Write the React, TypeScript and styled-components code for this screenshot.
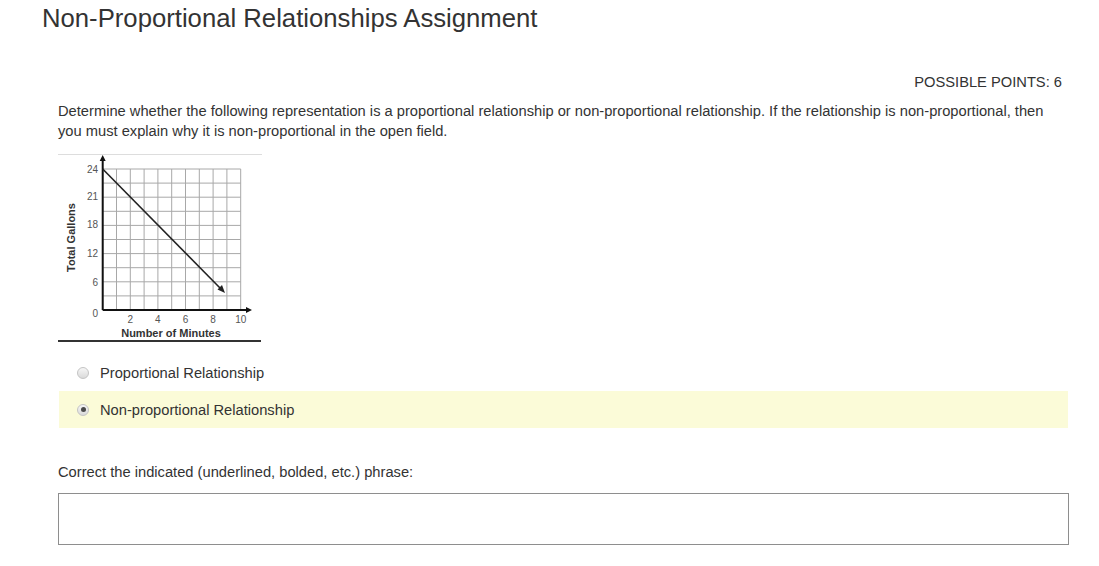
import React from "react";
import styled, { createGlobalStyle } from "styled-components";

const GlobalStyle = createGlobalStyle`
  body {
    margin: 0;
    background: #ffffff;
    font-family: "Liberation Sans", Arial, sans-serif;
    color: #333333;
  }
`;

const Page = styled.div`
  width: 1099px;
`;

const Title = styled.h1`
  margin: 0;
  padding: 1px 0 0 42px;
  font-size: 25.7px;
  line-height: 35px;
  font-weight: normal;
  color: #333333;
`;

const Question = styled.div`
  margin: 36px 30px 0 58px;
  font-size: 14.7px;
  line-height: 20px;
`;

const Points = styled.div`
  text-align: right;
  padding-right: 7px;
  text-transform: uppercase;
`;

const Prompt = styled.p`
  margin: 9px 0 0;
  padding-right: 16px;
`;

const Figure = styled.div`
  margin-top: 13px;
  width: 204px;
  height: 188px;
`;

const Options = styled.div`
  margin-top: 12px;
`;

const Option = styled.label<{ $selected?: boolean }>`
  display: flex;
  align-items: center;
  gap: 11px;
  height: 37px;
  margin: 0 1px;
  padding-left: 18px;
  background: ${(p) => (p.$selected ? "#fbfbd8" : "transparent")};
`;

const Radio = styled.span<{ $checked?: boolean }>`
  position: relative;
  width: 12px;
  height: 12px;
  box-sizing: border-box;
  border-radius: 50%;
  border: 1px solid #c4c4c4;
  background: linear-gradient(#f6f6f6, #dadada);

  &::after {
    content: "";
    display: ${(p) => (p.$checked ? "block" : "none")};
    position: absolute;
    left: 2.5px;
    top: 2.5px;
    width: 5px;
    height: 5px;
    border-radius: 50%;
    background: #4a4a4a;
  }
`;

const FieldLabel = styled.div`
  margin-top: 34px;
`;

const Answer = styled.textarea`
  display: block;
  margin-top: 11px;
  width: 1011px;
  height: 52px;
  box-sizing: border-box;
  border: 1px solid #8e8e8e;
  border-radius: 0;
  resize: none;
  font-family: inherit;
  font-size: 14px;
`;

// graph picture: gallons over minutes
const X0 = 44.7;
const Y0 = 15;
const CELL_W = 13.8;
const CELL_H = 14.1;

function Chart() {
  const cols = Array.from({ length: 11 }, (_, i) => i);
  const yLabels = [
    { t: "24", y: 15 },
    { t: "21", y: 42 },
    { t: "18", y: 70 },
    { t: "12", y: 99 },
    { t: "6", y: 128 },
    { t: "0", y: 159 },
  ];
  const xLabels = ["2", "4", "6", "8", "10"];
  const bottom = Y0 + CELL_H * 10;
  const right = X0 + CELL_W * 10;
  return (
    <svg width="204" height="188" viewBox="0 0 204 188">
      <line x1="0" y1="0.5" x2="204" y2="0.5" stroke="#dddddd" />
      {cols.map((i) => (
        <line
          key={"v" + i}
          x1={X0 + i * CELL_W}
          y1={Y0}
          x2={X0 + i * CELL_W}
          y2={bottom}
          stroke="#a8a8a8"
          strokeWidth="1"
        />
      ))}
      {cols.map((i) => (
        <line
          key={"h" + i}
          x1={X0}
          y1={Y0 + i * CELL_H}
          x2={right}
          y2={Y0 + i * CELL_H}
          stroke="#a8a8a8"
          strokeWidth="1"
        />
      ))}
      <line x1={X0} y1={bottom} x2={X0} y2="4" stroke="#111" strokeWidth="2" />
      <polygon points={`${X0},1 ${X0 - 3},7 ${X0 + 3},7`} fill="#111" />
      <line x1={X0} y1={bottom} x2="190" y2={bottom} stroke="#111" strokeWidth="2" />
      <polygon points={`194,${bottom} 188,${bottom - 3} 188,${bottom + 3}`} fill="#111" />
      <line x1={X0} y1={Y0} x2="163" y2="135" stroke="#222" strokeWidth="1.6" />
      <polygon points="167,139 159.5,135.5 164,131" fill="#222" />
      <g fontFamily="Liberation Sans, Arial, sans-serif" fontSize="10" fill="#555">
        {yLabels.map((l) => (
          <text key={l.t} x="40" y={l.y} textAnchor="end" dominantBaseline="central">
            {l.t}
          </text>
        ))}
        {xLabels.map((t, i) => (
          <text
            key={t}
            x={X0 + (i + 1) * 2 * CELL_W}
            y="165"
            textAnchor="middle"
            dominantBaseline="central"
          >
            {t}
          </text>
        ))}
      </g>
      <text
        x="113"
        y="179"
        textAnchor="middle"
        dominantBaseline="central"
        fontFamily="Liberation Sans, Arial, sans-serif"
        fontSize="11"
        fontWeight="bold"
        fill="#333"
      >
        Number of Minutes
      </text>
      <text
        transform="translate(12.5 83.5) rotate(-90)"
        textAnchor="middle"
        dominantBaseline="central"
        fontFamily="Liberation Sans, Arial, sans-serif"
        fontSize="11"
        fontWeight="bold"
        fill="#333"
      >
        Total Gallons
      </text>
      <line x1="0" y1="187" x2="203" y2="187" stroke="#333" strokeWidth="2" />
    </svg>
  );
}

export default function App() {
  return (
    <Page>
      <GlobalStyle />
      <Title>Non-Proportional Relationships Assignment</Title>
      <Question>
        <Points>Possible Points: 6</Points>
        <Prompt>
          Determine whether the following representation is a proportional
          relationship or non-proportional relationship. If the relationship is
          non-proportional, then you must explain why it is non-proportional in
          the open field.
        </Prompt>
        <Figure>
          <Chart />
        </Figure>
        <Options>
          <Option>
            <Radio />
            Proportional Relationship
          </Option>
          <Option $selected>
            <Radio $checked />
            Non-proportional Relationship
          </Option>
        </Options>
        <FieldLabel>Correct the indicated (underlined, bolded, etc.) phrase:</FieldLabel>
        <Answer />
      </Question>
    </Page>
  );
}
